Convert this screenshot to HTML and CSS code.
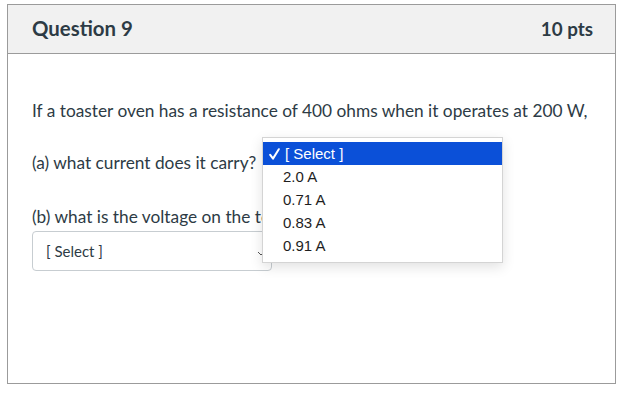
FILE: index.html
```html
<!DOCTYPE html>
<html>
<head>
<meta charset="utf-8">
<link rel="stylesheet" href="styles.css">
</head>
<body>
<div class="card">
  <div class="card-header">
    <h2 class="q-title">Question 9</h2>
    <span class="q-points">10 pts</span>
  </div>
  <div class="card-body">
    <p class="q-text">If a toaster oven has a resistance of 400 ohms when it operates at 200 W,</p>
    <p class="q-text q-a">(a) what current does it carry?</p>
    <p class="q-text q-b">(b) what is the voltage on the toaster?</p>
    <div class="select-box">
      <span>[ Select ]</span>
      <svg class="chev" width="8" height="5" viewBox="0 0 8 5"><path d="M1 1l3 3 3-3" fill="none" stroke="#555" stroke-width="1"/></svg>
    </div>
    <ul class="menu">
      <li class="menu-item selected"><svg class="check" width="11" height="12" viewBox="0 0 11 12"><path d="M1.2 6.8L4 10.6L9.8 1.2" fill="none" stroke="#fff" stroke-width="2" stroke-linecap="round" stroke-linejoin="round"/></svg>[ Select ]</li>
      <li class="menu-item">2.0 A</li>
      <li class="menu-item">0.71 A</li>
      <li class="menu-item">0.83 A</li>
      <li class="menu-item">0.91 A</li>
    </ul>
  </div>
</div>
</body>
</html>
```

FILE: styles.css
```css
html, body {
  margin: 0;
  padding: 0;
  background: #ffffff;
}
body {
  padding: 4px 0 0 7px;
  font-family: Lato, "Liberation Sans", sans-serif;
  color: #2d3b45;
}
.card {
  width: 607px;
  height: 378px;
  border: 1px solid #9b9b9b;
  position: relative;
}
.card-header {
  height: 48px;
  background: #f1f1f1;
  border-bottom: 1px solid #9b9b9b;
  display: flex;
  align-items: center;
  justify-content: space-between;
  padding: 0 22px 0 24px;
}
.q-title {
  margin: 0;
  font-size: 20.4px;
  font-weight: 700;
  margin-top: -2px;
}
.q-points {
  font-size: 18.8px;
  font-weight: 700;
  margin-top: -2px;
}
.card-body {
  padding: 45px 24px 0 24px;
  position: relative;
}
.q-text {
  margin: 0;
  font-size: 17.3px;
  line-height: 24px;
}
.q-a {
  margin-top: 28px;
}
.q-b {
  margin-top: 30px;
}
.select-box {
  margin-top: 2px;
  height: 38px;
  border: 1px solid #c7cdd1;
  border-radius: 4px;
  display: flex;
  align-items: center;
  justify-content: space-between;
  padding: 0 6px 0 13px;
  box-sizing: content-box;
  width: 219px;
  font-size: 15px;
}
.chev {
  margin-top: 4px;
}
.menu {
  position: absolute;
  left: 254px;
  top: 83px;
  width: 239px;
  margin: 0;
  padding: 4px 0 5px 0;
  list-style: none;
  background: #fff;
  border: 1px solid #d4d4d4;
  box-shadow: 0 4px 12px rgba(0,0,0,0.12);
  font-family: "Liberation Sans", Arial, sans-serif;
  font-size: 15px;
  color: #1e1e1e;
}
.menu-item {
  height: 23px;
  line-height: 23px;
  padding-left: 20px;
}
.menu-item.selected {
  display: flex;
  align-items: center;
  background: #0b50d8;
  color: #fff;
  padding-left: 6px;
}
.check {
  margin-right: 5px;
  flex: none;
}
```
